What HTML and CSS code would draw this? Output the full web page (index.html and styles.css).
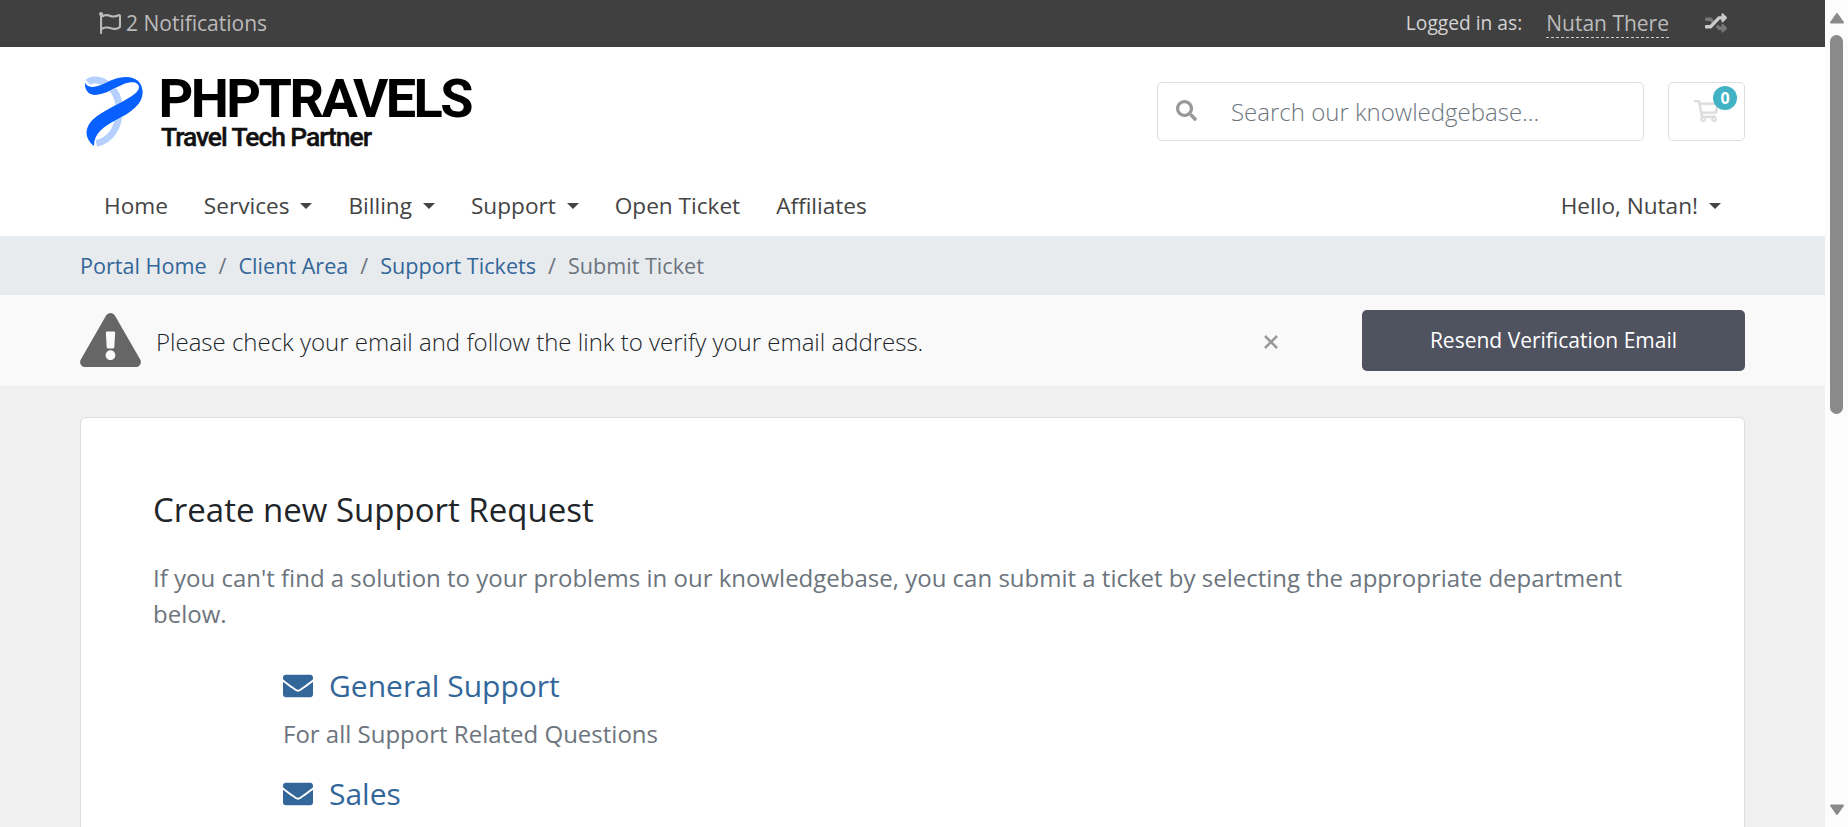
FILE: index.html
```html
<!DOCTYPE html>
<html lang="en">
<head>
<meta charset="utf-8">
<title>Submit Ticket - PHPTRAVELS</title>
<link rel="stylesheet" href="styles.css">
</head>
<body>
<div class="viewport">
<div class="page">
  <div class="topbar"><div class="container topbar-row">
    <a class="notifications"><svg class="icon-flag" viewBox="0 0 512 512"><path d="M336.174 80c-49.132 0-93.305-32-161.913-32-31.301 0-58.303 6.482-80.721 15.168a48.04 48.04 0 0 0 2.142-20.727C93.067 19.575 74.167 1.594 51.201.104 23.242-1.71 0 20.431 0 48c0 17.764 9.657 33.262 24 41.562V496c0 8.837 7.163 16 16 16h16c8.837 0 16-7.163 16-16v-83.443C109.869 395.28 143.259 384 199.826 384c49.132 0 93.305 32 161.913 32 58.479 0 101.972-22.617 128.548-39.981C503.846 367.161 512 352.051 512 335.855V95.937c0-34.459-35.264-57.768-66.904-44.117C409.193 67.309 371.641 80 336.174 80zM464 336c-21.783 15.412-60.824 32-102.261 32-59.945 0-102.002-32-161.913-32-43.361 0-96.379 9.403-127.826 24V128c21.784-15.412 60.824-32 102.261-32 59.945 0 102.002 32 161.913 32 43.271 0 96.320-17.366 127.826-32v240z"/></svg><span>2 Notifications</span></a>
    <div class="account"><span class="logged">Logged in as:</span><a class="account-name">Nutan There</a>
      <svg class="icon-shuffle" viewBox="0 0 512 512"><path class="dim" d="M0 168v-16c0-13.255 10.745-24 24-24h110a24 24 0 0 1 17.600 7.700l56 60-53.300 57.100L113 208H24c-13.255 0-24-10.745-24-40zM505 359c9.300 9.400 9.300 24.600 0 34l-80 80c-15 15-41 4.470-41-17v-40h-62a24 24 0 0 1-17.600-7.700l-56-60 53.300-57.100L343 336h41v-40c0-21.500 26-32 41-17z"/><path d="M505 153c9.300-9.400 9.300-24.600 0-34l-80-80c-15-15-41-4.400-41 17v40h-62a24 24 0 0 0-17.600 7.700L113 304H24c-13.300 0-24 10.700-24 24v32c0 13.300 10.700 24 24 24h110a24 24 0 0 0 17.600-7.700L343 176h41v40c0 21.500 26 32 41 17z"/></svg></div>
  </div></div>

  <header class="header"><div class="container header-row">
    <svg class="logo" viewBox="0 0 400 90">
      <g transform="scale(.3333) translate(0 -3)">
        <path class="ribbon-light" d="M24 37C35 27 60 27 80 42C106 60 119 90 118 125C115 170 95 210 49 220"/>
        <path class="ribbon" d="M15 37C18 48 30 54 50 49C80 41 98 22 136 21C165 20 188 35 188 68C187 102 155 126 110 149C70 170 42 190 42 228C24 214 15 195 22 174C31 146 65 128 102 108C140 88 176 72 177 52C177 38 160 32 137 40C105 52 78 74 44 75C22 74 13 56 15 37Z"/>
      </g>
      <text class="logo-title" x="78.500" y="45.500" textLength="315">PHPTRAVELS</text>
      <text class="logo-sub" x="81" y="75" textLength="211">Travel Tech Partner</text>
    </svg>
    <div class="tools">
      <div class="search"><svg class="icon-search" viewBox="0 0 512 512"><path d="M505 442.700L405.300 343c-4.500-4.500-10.600-7-17-7H372c27.600-35.300 44-79.700 44-128C416 93.100 322.900 0 208 0S0 93.100 0 208s93.100 208 208 208c48.300 0 92.700-16.400 128-44v16.300c0 6.400 2.500 12.500 7 17l99.700 99.700c9.400 9.400 24.600 9.400 33.900 0l28.300-28.300c9.400-9.400 9.400-24.600.1-34zM208 336c-70.700 0-128-57.200-128-128 0-70.700 57.200-128 128-128 70.700 0 128 57.200 128 128 0 70.700-57.200 128-128 128z"/></svg><span>Search our knowledgebase...</span></div>
      <div class="cart"><svg class="icon-cart" viewBox="0 0 576 512"><path d="M551.991 64H144.280l-8.726-44.608C133.350 8.128 123.478 0 112 0H12C5.373 0 0 5.373 0 12v24c0 6.627 5.373 12 12 12h80.240l69.594 355.701C150.796 415.201 144 430.802 144 448c0 35.346 28.654 64 64 64s64-28.654 64-64a63.681 63.681 0 0 0-8.583-32h145.167a63.681 63.681 0 0 0-8.583 32c0 35.346 28.654 64 64 64 35.346 0 64-28.654 64-64 0-18.136-7.556-34.496-19.676-46.142l1.035-4.757c3.254-14.960-8.142-29.101-23.452-29.101H203.760l-9.390-48h312.405c11.290 0 21.054-7.869 23.452-18.902l45.216-208C578.695 78.139 567.299 64 551.991 64zM208 472c-13.234 0-24-10.766-24-24s10.766-24 24-24 24 10.766 24 24-10.766 24-24 24zm256 0c-13.234 0-24-10.766-24-24s10.766-24 24-24 24 10.766 24 24-10.766 24-24 24zm23.438-200H184.980l-31.310-160h368.548l-34.780 160z"/></svg><span class="badge">0</span></div>
    </div>
  </div>
  <nav class="container nav">
    <div class="nav-list"><a>Home</a><a class="drop">Services</a><a class="drop">Billing</a><a class="drop">Support</a><a>Open Ticket</a><a>Affiliates</a></div>
    <a class="drop">Hello, Nutan!</a>
  </nav></header>

  <div class="breadcrumb"><div class="container crumbs"><a>Portal Home</a><i>/</i><a>Client Area</a><i>/</i><a>Support Tickets</a><i>/</i><span>Submit Ticket</span></div></div>

  <div class="verify"><div class="container verify-row">
    <svg class="icon-warning" viewBox="0 0 576 512"><path d="M569.517 440.013C587.975 472.007 564.806 512 527.940 512H48.054c-36.937 0-59.999-40.055-41.577-71.987L246.423 23.985c18.467-32.009 64.720-31.951 83.154 0l239.940 416.028zM288 354c-25.405 0-46 20.595-46 46s20.595 46 46 46 46-20.595 46-46-20.595-46-46-46zm-43.673-165.346l7.418 136c.347 6.364 5.609 11.346 11.982 11.346h48.546c6.373 0 11.635-4.982 11.982-11.346l7.418-136c.375-6.874-5.098-12.654-11.982-12.654h-63.383c-6.884 0-12.356 5.780-11.981 12.654z"/></svg>
    <span class="verify-text">Please check your email and follow the link to verify your email address.</span>
    <svg class="icon-close" viewBox="0 0 16 16"><path d="M2 2L14 14M14 2L2 14"/></svg>
    <a class="resend">Resend Verification Email</a>
  </div></div>

  <main class="container"><section class="card">
    <h1>Create new Support Request</h1>
    <p class="intro">If you can't find a solution to your problems in our knowledgebase, you can submit a ticket by selecting the appropriate department below.</p>
    <div class="departments">
      <a class="department"><svg class="icon-mail" viewBox="0 0 512 512"><path d="M502.300 190.800c3.900-3.100 9.700-.2 9.700 4.700V400c0 26.500-21.500 48-48 48H48c-26.500 0-48-21.500-48-48V195.600c0-5 5.700-7.800 9.700-4.700 22.400 17.400 52.100 39.500 154.100 113.600 21.100 15.400 56.700 47.800 92.200 47.600 35.700.3 72-32.800 92.300-47.600 102-74.100 131.600-96.300 154-113.700zM256 320c23.200.4 56.600-29.200 73.400-41.400 132.700-96.300 142.800-104.700 173.400-128.700 5.800-4.500 9.200-11.500 9.200-18.900v-19c0-26.500-21.500-48-48-48H48c-26.500 0-48 21.500-48 48v19c0 7.400 3.400 14.300 9.200 18.900 30.600 23.900 40.700 32.400 173.400 128.700 16.800 12.200 50.200 41.800 73.400 41.400z"/></svg><span>General Support</span></a>
      <p>For all Support Related Questions</p>
      <a class="department"><svg class="icon-mail" viewBox="0 0 512 512"><path d="M502.300 190.800c3.900-3.100 9.700-.2 9.700 4.700V400c0 26.500-21.500 48-48 48H48c-26.500 0-48-21.500-48-48V195.600c0-5 5.700-7.800 9.700-4.700 22.400 17.400 52.100 39.500 154.100 113.600 21.100 15.400 56.700 47.800 92.200 47.600 35.700.3 72-32.800 92.300-47.600 102-74.100 131.600-96.300 154-113.700zM256 320c23.200.4 56.600-29.200 73.400-41.400 132.700-96.300 142.800-104.700 173.400-128.700 5.800-4.500 9.200-11.500 9.200-18.900v-19c0-26.500-21.500-48-48-48H48c-26.500 0-48 21.500-48 48v19c0 7.400 3.400 14.300 9.200 18.900 30.600 23.900 40.700 32.400 173.400 128.700 16.800 12.200 50.200 41.800 73.400 41.400z"/></svg><span>Sales</span></a>
    </div>
  </section></main>
</div>
<div class="scrollbar">
  <svg class="arrow" viewBox="0 0 16 12"><path d="M8 2L14 10.500H2Z"/></svg>
  <div class="thumb"></div>
  <svg class="arrow arrow-down" viewBox="0 0 16 12"><path d="M2 1.500H14L8 10Z"/></svg>
</div>
</div>
</body>
</html>
```
FILE: styles.css
```css
* { box-sizing: border-box; }
body { margin: 0; font-family: "Open Sans", "Noto Sans", sans-serif; font-size: 24px; line-height: 36px; color: #212529; }
h1, p { margin: 0; font-weight: 400; }
svg { display: block; flex: none; fill: currentColor; }
.viewport { display: flex; height: 827px; overflow: hidden; }
.page { width: 1825px; background: #f0f0f0; overflow: hidden; }
.container { width: 1665px; margin: 0 auto; }

.topbar { height: 47px; background: #404040; color: #ccc; font-size: 21px; }
.topbar-row { display: flex; justify-content: space-between; height: 46px; align-items: center; padding: 0 18px 0 19px; }
.notifications { display: flex; align-items: center; gap: 5px; color: #bbb; }
.icon-flag { width: 22px; height: 22px; }
.account { display: flex; align-items: center; }
.logged { font-size: 19.200px; margin-right: 24px; color: #d4d4d4; }
.account-name { border-bottom: 1px dashed #ccc; height: 30px; line-height: 31px; margin-right: 36px; color: #bbb; }
.icon-shuffle { width: 22px; height: 22px; color: #ccc; }
.icon-shuffle .dim { fill: #777; }

.header { height: 189px; background: #fff; }
.header-row { display: flex; justify-content: space-between; padding-top: 24px; height: 129px; }
.logo { width: 400px; height: 90px; overflow: visible; }
.logo-title { font: 700 54px Roboto, sans-serif; fill: #000; }
.logo-sub { font: 500 26.500px Roboto, sans-serif; fill: #111; stroke: #111; stroke-width: .4; }
.ribbon { fill: #0860ff; stroke: #fff; stroke-width: 3; paint-order: stroke; }
.ribbon-light { fill: none; stroke: #b5d0ff; stroke-width: 21; }
.tools { display: flex; gap: 24px; padding-top: 11px; }
.search { width: 487px; height: 59px; border: 1px solid #ddd; border-radius: 5px; display: flex; align-items: center; padding-left: 18px; gap: 34px; color: #6c757d; font-weight: 300; }
.icon-search { width: 21px; height: 21px; color: #999; margin-top: -2px; }
.cart { position: relative; width: 77px; height: 59px; border: 1px solid #ddd; border-radius: 5px; padding: 17px 0 0 25px; }
.icon-cart { width: 25px; height: 22px; color: #ddd; stroke: currentColor; stroke-width: 10; }
.badge { position: absolute; left: 44px; top: 3px; width: 24px; height: 24px; border-radius: 50%; background: #42b3c4; color: #fff; font-weight: 700; font-size: 16px; line-height: 24px; text-align: center; }
.nav { display: flex; justify-content: space-between; align-items: flex-start; height: 60px; padding: 12px 24px 0; color: #444; font-size: 22.600px; }
.nav-list { display: flex; gap: 36px; }
.drop { display: flex; align-items: center; gap: 11px; }
.drop::after { content: ""; border: 6px solid transparent; border-top-color: #444; border-bottom: 0; margin-top: -1px; }

.breadcrumb { height: 59px; background: #e8ebee; }
.crumbs { display: flex; gap: 12px; padding-top: 12px; font-size: 21.600px; color: #6c757d; }
.crumbs a { color: #369; }
.crumbs i { font-style: normal; }

.verify { height: 92px; background: #f9f9f9; border-bottom: 1px solid #ebebeb; }
.verify-row { display: flex; align-items: center; height: 90px; }
.icon-warning { width: 61px; height: 54px; color: #666; }
.verify-text { width: 1105px; padding-left: 15px; padding-top: 4px; font-weight: 300; }
.icon-close { width: 16px; height: 16px; margin: 3px 0 0 17px; fill: none; stroke: #999; stroke-width: 2.500; }
.resend { width: 383px; height: 61px; margin-left: auto; background: #4f525f; color: #fff; border-radius: 5px; text-align: center; font-size: 21px; line-height: 60px; }

.card { margin-top: 30px; height: 500px; border: 1px solid #ddd; border-radius: 6px; background: #fff; padding: 70px 72px 0; }
h1 { font-size: 33px; line-height: 43px; }
.intro { margin-top: 29px; color: #6c757d; }
.departments { padding: 30px 0 0 130px; }
.department { display: flex; align-items: center; gap: 16px; height: 48px; font-size: 30px; color: #369; }
.icon-mail { width: 30px; height: 30px; }
.departments p { margin: 6px 0 18px; color: #6c757d; }

.scrollbar { width: 23px; background: #fcfcfc; display: flex; flex-direction: column; align-items: center; padding: 12px 0 11px; color: #8a8a8a; }
.arrow { width: 16px; height: 12px; stroke: currentColor; stroke-width: 2; stroke-linejoin: round; }
.thumb { width: 13px; height: 379px; margin-top: 11px; border-radius: 7px; background: #8a8a8a; }
.arrow-down { margin-top: auto; }
```
